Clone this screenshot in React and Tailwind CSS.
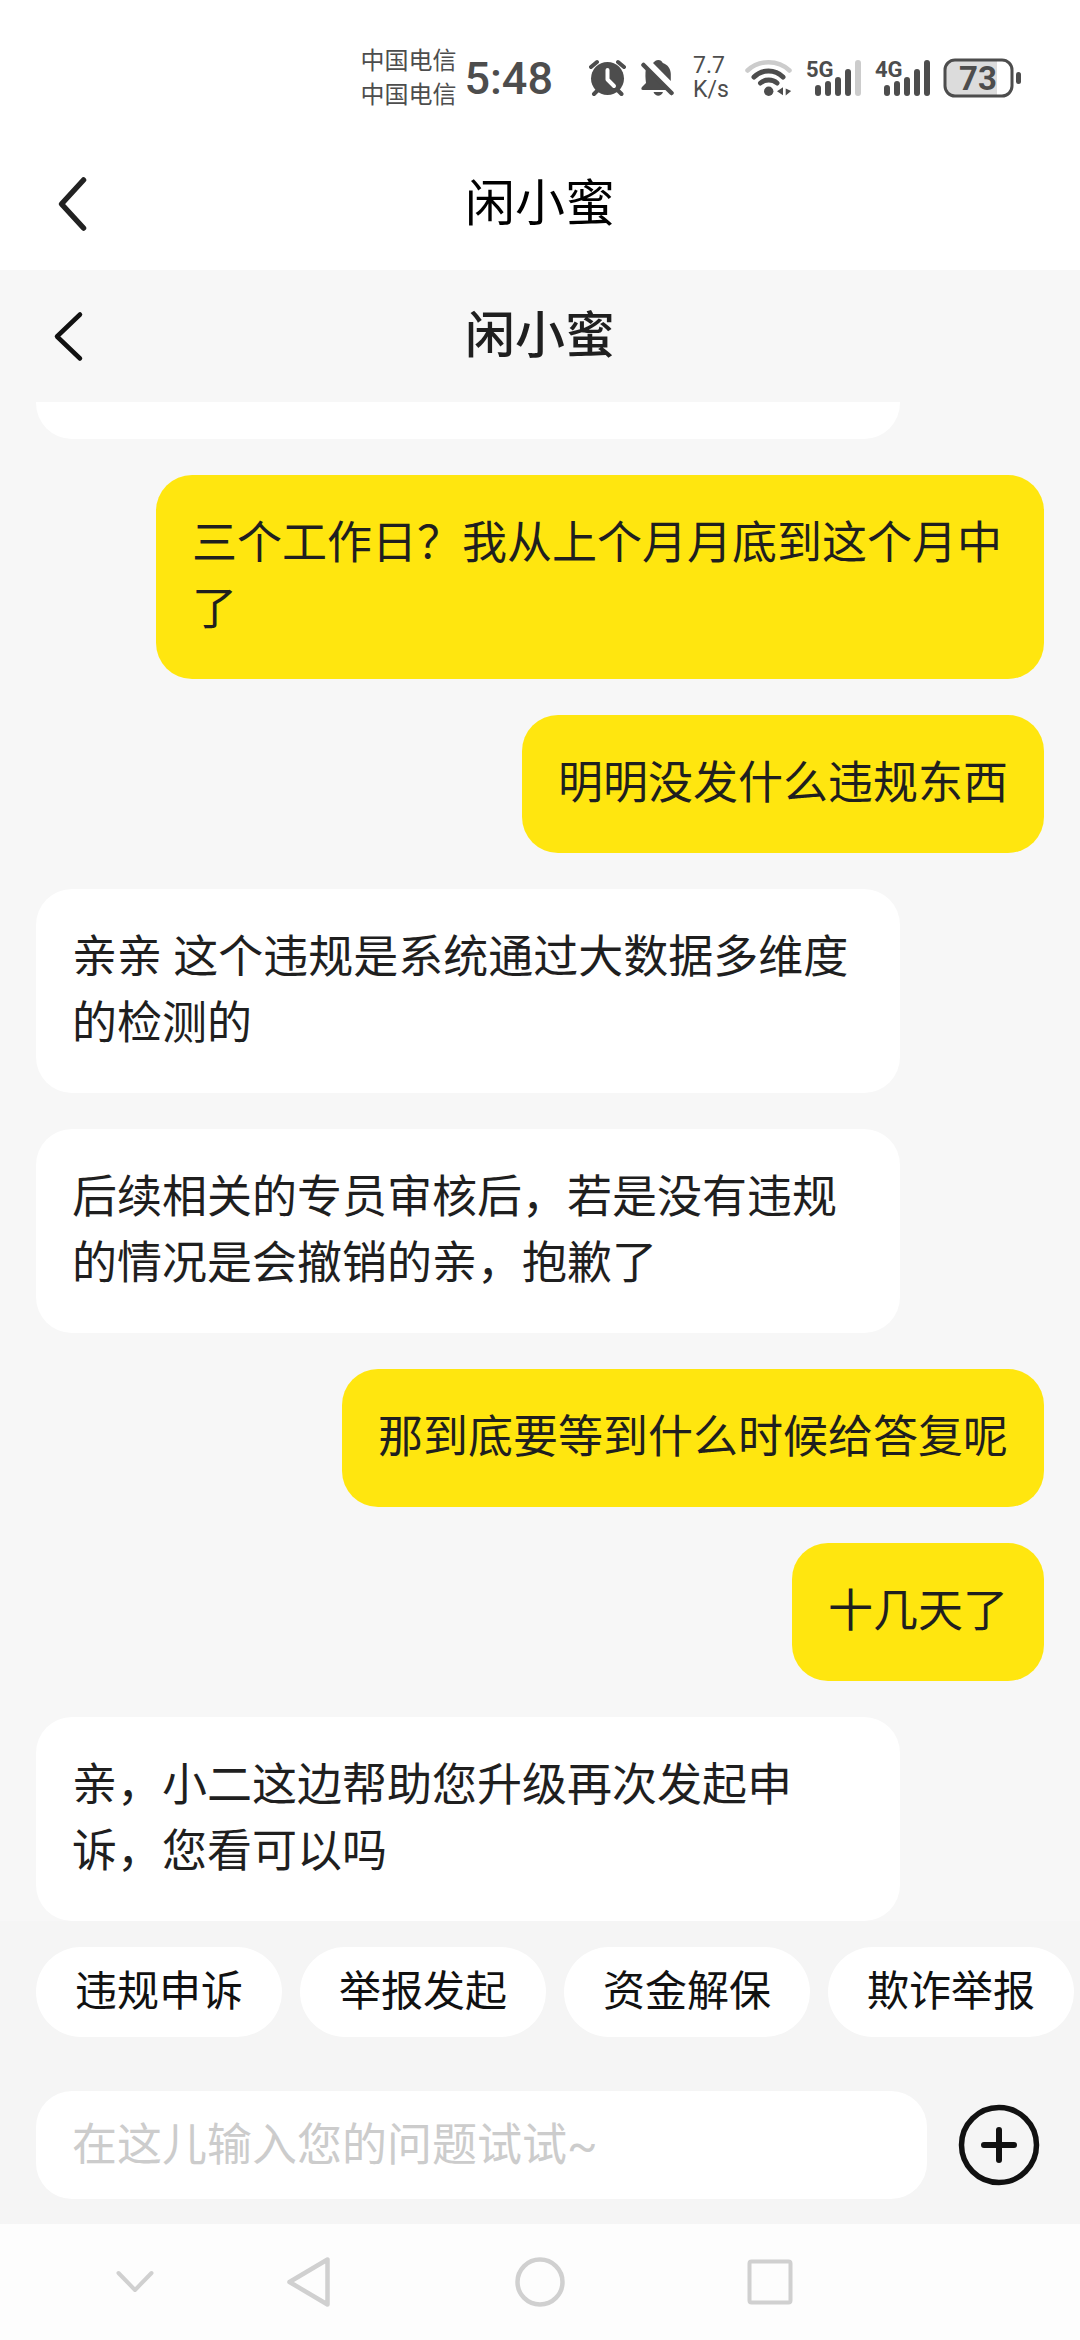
import React, { useState } from "react";

const messages = [
  { id: 1, mine: true, text: "三个工作日？我从上个月月底到这个月中了" },
  { id: 2, mine: true, text: "明明没发什么违规东西" },
  { id: 3, mine: false, text: "亲亲 这个违规是系统通过大数据多维度的检测的" },
  {
    id: 4,
    mine: false,
    text: "后续相关的专员审核后，若是没有违规的情况是会撤销的亲，抱歉了",
  },
  { id: 5, mine: true, text: "那到底要等到什么时候给答复呢" },
  { id: 6, mine: true, text: "十几天了" },
  { id: 7, mine: false, text: "亲，小二这边帮助您升级再次发起申诉，您看可以吗" },
];

const shortcuts = ["违规申诉", "举报发起", "资金解保", "欺诈举报"];

const bars = [
  { x: 10, y: 27 },
  { x: 20, y: 23 },
  { x: 30, y: 19 },
  { x: 40, y: 11 },
  { x: 50, y: 2 },
];

function Signal({ label, level }) {
  return (
    <svg
      width="57"
      height="40"
      viewBox="0 0 57 40"
      fill="currentColor"
      className="overflow-visible"
    >
      {bars.map((bar, index) => (
        <rect
          key={bar.x}
          x={bar.x}
          y={bar.y}
          width="6"
          height={38 - bar.y}
          rx="3"
          fill={index < level ? "currentColor" : "#cccccc"}
        />
      ))}
      <text x="1" y="19" className="text-[22px] font-bold">
        {label}
      </text>
    </svg>
  );
}

function StatusBar() {
  return (
    <div className="flex h-[138px] items-center justify-end gap-3 pt-[18px] pr-[58px] text-[#4d4d4d]">
      <div className="mr-6 flex items-center gap-2">
        <div className="text-2xl leading-[34px]">
          <p>中国电信</p>
          <p>中国电信</p>
        </div>
        <span className="text-[45px] leading-none font-medium">5:48</span>
      </div>
      <svg width="40" height="40" viewBox="0 0 40 40" fill="none" strokeLinecap="round">
        <circle cx="18.5" cy="20.5" r="16.5" fill="currentColor" />
        <path
          d="M2 9 8 4M29 4l6 5M5 36l4-4M32.500 36l-4-4"
          stroke="currentColor"
          strokeWidth="4"
        />
        <path
          d="M18.500 12v9.500l6.500 6.500"
          stroke="white"
          strokeWidth="4"
          strokeLinejoin="round"
        />
      </svg>
      <svg width="40" height="40" viewBox="0 0 40 40" fill="currentColor">
        <path d="M12 5c2-2 3-3 5.300-3s3.500 1 4.500 3c5 1.500 8 6 8 11v7z" />
        <path d="M5 10 27 32H2c-2 0-2-2-1-3l4-4c-.5-4-1-9 0-15z" />
        <path d="M12.500 34H22c-2 5-7.500 5-9.500 0z" />
        <path d="m2.500 7 28 28" stroke="currentColor" strokeWidth="4.500" strokeLinecap="round" />
      </svg>
      <div className="w-10 text-[23px] leading-6">
        <p>7.7</p>
        <p>K/s</p>
      </div>
      <svg width="48" height="40" viewBox="0 0 48 40" fill="none" strokeLinecap="round">
        <path d="M2.500 12.500C14 1.500 33 1.500 44.500 12.500" stroke="#cccccc" strokeWidth="4.500" />
        <path d="M9 19c8-8 21-8 29 0" stroke="currentColor" strokeWidth="5" />
        <path d="M15.500 25c4.500-4 12-4 16.500 0" stroke="currentColor" strokeWidth="5" />
        <circle cx="23.700" cy="33.300" r="4.700" fill="currentColor" />
        <path d="m32 33.300 6-4v8zM40.700 30.500l5.500 2.500-5.500 4.500z" fill="currentColor" />
      </svg>
      <Signal label="5G" level={4} />
      <Signal label="4G" level={5} />
      <svg width="79" height="40" viewBox="0 0 79 40" fill="none">
        <path d="M12 2h42v36H12C6 38 2 34 2 28V12C2 6 6 2 12 2z" fill="#dcdcdc" />
        <rect x="2" y="2" width="67" height="36" rx="10" stroke="currentColor" strokeWidth="3" />
        <rect x="73" y="14" width="5" height="12" rx="2.500" fill="currentColor" />
        <text
          x="35"
          y="32"
          textAnchor="middle"
          fill="currentColor"
          className="text-[33px] font-bold"
        >
          73
        </text>
      </svg>
    </div>
  );
}

export default function App() {
  const [question, setQuestion] = useState("");

  return (
    <div
      lang="zh-CN"
      className="flex min-h-screen flex-col bg-[#f7f7f7] font-[Roboto,'Noto_Sans_CJK_SC',sans-serif] text-[45px] leading-[66px] text-[#1f1f1f]"
    >
      <header className="bg-white">
        <StatusBar />
        <div className="grid h-[132px] grid-cols-[1fr_auto_1fr] items-center px-12">
          <button type="button" aria-label="返回" className="h-[60px] w-12">
            <svg width="48" height="60" viewBox="0 0 48 60" fill="none">
              <path
                d="M35.500 6 13.500 30l22 24"
                stroke="#222222"
                strokeWidth="5.500"
                strokeLinecap="round"
                strokeLinejoin="round"
              />
            </svg>
          </button>
          <h1 className="text-[50px] text-black">闲小蜜</h1>
        </div>
      </header>

      <div className="grid h-[132px] grid-cols-[1fr_auto_1fr] items-center px-12">
        <button type="button" aria-label="返回上一页" className="h-[60px] w-12">
          <svg width="48" height="60" viewBox="0 0 48 60" fill="none">
            <path
              d="M32 8.500 9 30.500l23 22"
              stroke="#111111"
              strokeWidth="4.500"
              strokeLinecap="round"
              strokeLinejoin="round"
            />
          </svg>
        </button>
        <h2 className="text-[50px] font-medium">闲小蜜</h2>
      </div>

      <main className="flex flex-1 flex-col gap-9 px-9">
        {/* tail of an older message scrolled under the title */}
        <div className="mr-36 h-[37px] rounded-b-[36px] bg-white" />
        {messages.map((message) => (
          <p
            key={message.id}
            className={
              message.mine
                ? "ml-30 self-end rounded-[36px] bg-[#ffe60f] p-9"
                : "mr-36 rounded-[36px] bg-white p-9"
            }
          >
            {message.text}
          </p>
        ))}
      </main>

      <footer>
        <div className="flex flex-col gap-[54px] bg-[#f5f5f5] pt-[26px] pb-[25px]">
          <div className="flex gap-[18px] overflow-hidden pl-9">
            {shortcuts.map((name) => (
              <button
                key={name}
                type="button"
                className="h-[90px] shrink-0 rounded-full bg-white px-[39px] text-[42px] text-[#111111]"
              >
                {name}
              </button>
            ))}
          </div>
          <form className="flex items-center gap-[27px] px-9" onSubmit={(e) => e.preventDefault()}>
            <input
              type="text"
              id="question"
              aria-label="问题"
              placeholder="在这儿输入您的问题试试~"
              value={question}
              onChange={(e) => setQuestion(e.target.value)}
              className="h-[108px] min-w-0 flex-1 rounded-[36px] bg-white px-9 outline-none placeholder:text-[#cccccc]"
            />
            <button
              type="button"
              aria-label="更多"
              className="flex h-[90px] w-[90px] items-center justify-center"
            >
              <svg width="82" height="82" viewBox="0 0 82 82" fill="none" stroke="#111111">
                <circle cx="41" cy="41" r="37.500" strokeWidth="5.500" />
                <path d="M41 26v30M26 41h30" strokeWidth="6" strokeLinecap="round" />
              </svg>
            </button>
          </form>
        </div>

        <nav className="grid h-[116px] grid-cols-[195px_1fr_1fr_1fr_195px] items-center justify-items-center bg-[#fdfdfd] text-[#d0d0d0]">
          <button type="button" aria-label="收起" className="ml-[75px]">
            <svg width="50" height="50" viewBox="0 0 50 50" fill="none">
              <path
                d="m8.500 16 16.500 17 16.500-17"
                stroke="currentColor"
                strokeWidth="4"
                strokeLinecap="round"
                strokeLinejoin="round"
              />
            </svg>
          </button>
          <button type="button" aria-label="后退">
            <svg width="50" height="50" viewBox="0 0 50 50" fill="none">
              <path
                d="M4.500 25 42.500 2.500v45z"
                stroke="currentColor"
                strokeWidth="4.500"
                strokeLinejoin="round"
              />
            </svg>
          </button>
          <button type="button" aria-label="主页">
            <svg width="50" height="50" viewBox="0 0 50 50" fill="none">
              <circle cx="25" cy="25" r="22.500" stroke="currentColor" strokeWidth="4.500" />
            </svg>
          </button>
          <button type="button" aria-label="最近任务">
            <svg width="50" height="50" viewBox="0 0 50 50" fill="none">
              <rect x="4.500" y="4.500" width="41" height="41" rx="2" stroke="currentColor" strokeWidth="4" />
            </svg>
          </button>
        </nav>
      </footer>
    </div>
  );
}
